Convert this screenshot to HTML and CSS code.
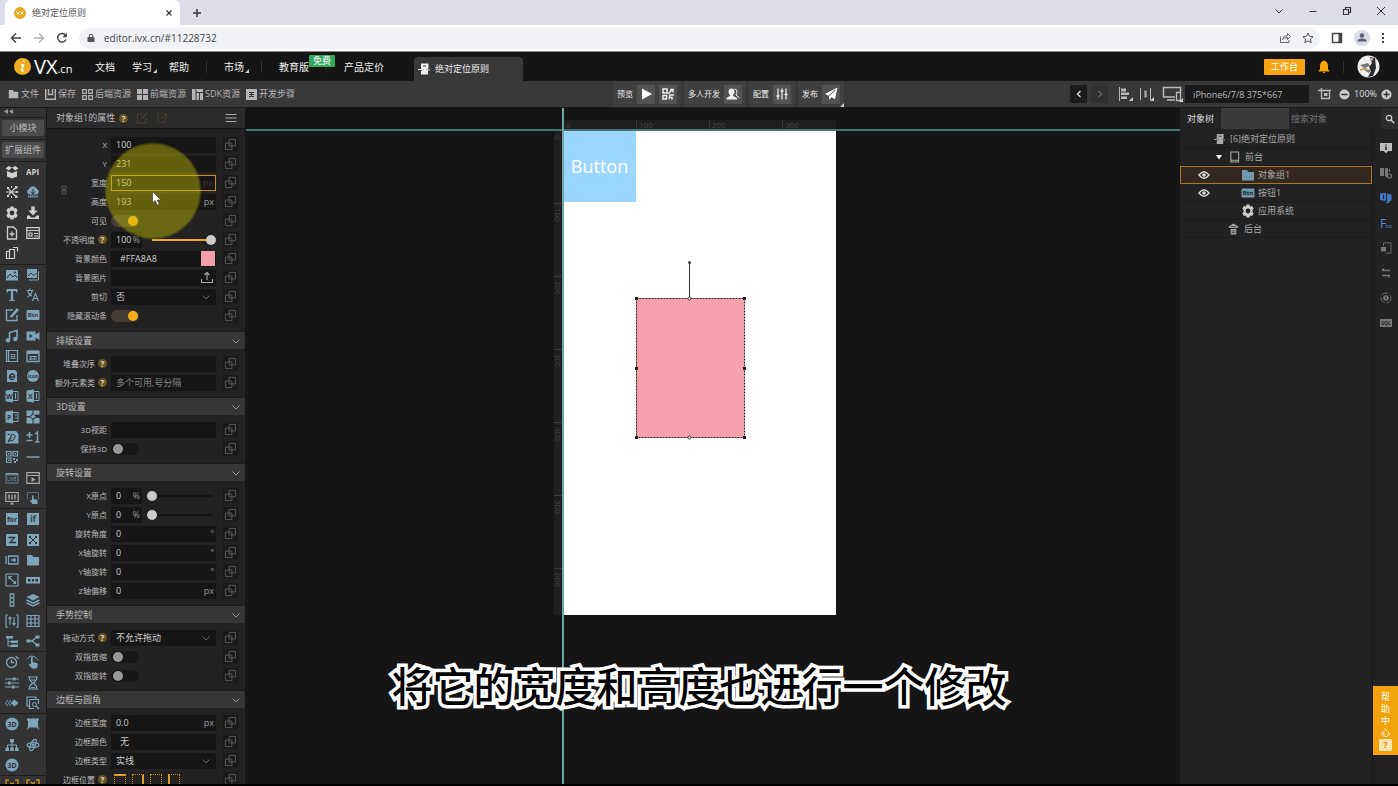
FILE: index.html
```html
<!DOCTYPE html>
<html lang="zh-CN">
<head>
<meta charset="utf-8">
<title>绝对定位原则</title>
<link rel="stylesheet" href="styles.css">
</head>
<body>
<svg class="defs" aria-hidden="true">
  <symbol id="copy" viewBox="0 0 14 14"><path d="M5.500 1.500h7v7h-7zM8.500 8.500v4h-7v-7h4M5.500 5.500h3v3" fill="none" stroke="currentColor"/></symbol>
  <symbol id="chev" viewBox="0 0 10 10"><path d="M1.500 3.500 5 7l3.500-3.500" fill="none" stroke="currentColor"/></symbol>
  <symbol id="gear" viewBox="0 0 14 14"><path d="M5.500.500h3l.5 2 2-.5 1.700 2.500L11.500 6v2l1.200 1.500L11 12l-2-.5-.5 2h-3l-.5-2-2 .5-1.700-2.500L2.500 8V6L1.300 4.500 3 2l2 .5zM7 4.600a2.400 2.400 0 1 0 0 4.800 2.400 2.400 0 0 0 0-4.800z" fill="currentColor" fill-rule="evenodd"/></symbol>
  <symbol id="folder" viewBox="0 0 14 14"><path d="M1 2h5l1.500 2H13v8.500H1z" fill="currentColor"/></symbol>
  <symbol id="page" viewBox="0 0 12 12"><path d="M3 .500h7.500v5L8 7h2v4.500H3V8l3-2H3z" fill="currentColor"/><path d="M0 6.500h5M8.500 7H12M5.500 3.500h3" stroke="currentColor"/><path d="M5 3h3" stroke="#333"/></symbol>
  <symbol id="eye" viewBox="0 0 12 12"><path d="M1 6q5-6.500 10 0-5 6.500-10 0z" fill="none" stroke="currentColor" stroke-width="1.300"/><circle cx="6" cy="6" r="1.800" fill="currentColor"/></symbol>
</svg>

<div class="browser">
  <div class="tabs">
    <div class="tab">
      <svg width="12" height="12" viewBox="0 0 12 12"><circle cx="6" cy="6" r="6" fill="#e9a820"/><path d="M2.500 4.500 4 7.500l2-3M6.500 4.500l3 3M9.500 4.500l-3 3" stroke="#fff" fill="none"/></svg>
      <span class="tab-title">绝对定位原则</span>
      <button class="plain" aria-label="关闭"><svg width="8" height="8" viewBox="0 0 8 8"><path d="M1.500 1.500l5 5M6.500 1.500l-5 5" stroke="#333" stroke-width="1.200"/></svg></button>
    </div>
    <button class="plain newtab" aria-label="新标签"><svg width="10" height="10" viewBox="0 0 10 10"><path d="M5 1v8M1 5h8" stroke="#333" stroke-width="1.400"/></svg></button>
    <div class="win">
      <button class="plain" aria-label="搜索标签"><svg width="10" height="10"><use href="#chev"/></svg></button>
      <button class="plain" aria-label="最小化"><svg width="10" height="10" viewBox="0 0 10 10"><path d="M1.500 5.500h7" stroke="currentColor"/></svg></button>
      <button class="plain" aria-label="还原"><svg width="10" height="10" viewBox="0 0 10 10"><path d="M1.500 3.500h5v5h-5zM3.500 3V1.500h5v5H7" fill="none" stroke="currentColor" stroke-width="1.200"/></svg></button>
      <button class="plain" aria-label="关闭窗口"><svg width="10" height="10" viewBox="0 0 10 10"><path d="M1 1l8 8M9 1l-8 8" stroke="currentColor"/></svg></button>
    </div>
  </div>
  <div class="address">
    <button class="plain" aria-label="后退"><svg width="12" height="12" viewBox="0 0 12 12"><path d="M11 6H1.500M6 1.500 1.500 6 6 10.500" fill="none" stroke="#444" stroke-width="1.400"/></svg></button>
    <button class="plain" aria-label="前进"><svg width="12" height="12" viewBox="0 0 12 12"><path d="M1 6h9.500M6 1.500 10.500 6 6 10.500" fill="none" stroke="#b0b0b0" stroke-width="1.300"/></svg></button>
    <button class="plain" aria-label="刷新"><svg width="12" height="12" viewBox="0 0 12 12"><path d="M10 7.500A4.300 4.300 0 1 1 9.500 3.200" fill="none" stroke="#444" stroke-width="1.500"/><path d="M10.800.8v4.400H6.500z" fill="#444"/></svg></button>
    <div class="omni">
      <svg width="8" height="10" viewBox="0 0 8 10"><path d="M.5 4h7v5h-7z" fill="#555"/><path d="M2.300 4.500V3a1.700 1.700 0 0 1 3.400 0v1.500" fill="none" stroke="#555" stroke-width="1.100"/></svg>
      <input class="url" aria-label="地址" value="editor.ivx.cn/#11228732">
      <svg width="12" height="12" viewBox="0 0 12 12"><path d="M1.500 4.500v6h8.500V8M3.500 7.500q.5-4 5-4V1.500l3 3-3 3v-2q-3.500 0-5 2z" fill="none" stroke="#666"/></svg>
      <svg width="12" height="12" viewBox="0 0 12 12"><path d="M6 1l1.500 3.300 3.600.4-2.700 2.400.8 3.600L6 8.900l-3.200 1.800.8-3.600L.9 4.700l3.600-.4z" fill="none" stroke="#555"/></svg>
    </div>
    <svg width="12" height="12" viewBox="0 0 12 12"><path d="M1.500 1.500h9v9h-9z" fill="none" stroke="#444" stroke-width="1.500"/><path d="M7.500 1h3.500v10H7.500z" fill="#444"/></svg>
    <svg width="16" height="16" viewBox="0 0 16 16"><circle cx="8" cy="8" r="8" fill="#d9dbe8"/><circle cx="8" cy="5.500" r="2.200" fill="#596077"/><path d="M3.500 11.500V10q4.500-2.800 9 0v1.500z" fill="#596077"/></svg>
    <svg width="4" height="12" viewBox="0 0 4 12"><path d="M1 1h2v2H1zM1 5h2v2H1zM1 9h2v2H1z" fill="#444"/></svg>
  </div>
</div>

<header class="top">
  <a class="logo" href="#"><svg width="17" height="17" viewBox="0 0 17 17"><circle cx="8.500" cy="8.500" r="8.500" fill="#efae23"/><path d="M9.500 3.200h.8M6.800 7h2.500l-1.500 5q-.3 1.500 2 .6" fill="none" stroke="#fff" stroke-width="1.600"/></svg><span>VX</span><small>.cn</small></a>
  <nav class="menu">
    <a href="#">文档</a><a href="#" class="more">学习</a><a href="#">帮助</a><i></i>
    <a href="#" class="more">市场</a><i></i><a href="#" class="edu">教育版<b>免费</b></a><i class="tight"></i><a href="#">产品定价</a>
  </nav>
  <div class="doc-tab"><svg width="12" height="12"><use href="#page"/></svg>绝对定位原则</div>
  <div class="account">
    <button class="work">工作台</button>
    <svg width="12" height="14" viewBox="0 0 12 14"><path d="M6 .5q4 1 4 5.500v3l1.700 2.500H.3L2 9V6Q2 1.500 6 .5zM4.500 12h3L6 13.500z" fill="#f7a70c"/></svg>
    <i></i>
    <svg width="23" height="23" viewBox="0 0 23 23"><circle cx="11.500" cy="11.500" r="11" fill="#eee"/><path d="M13 2l5 1 1 10-3 8-5 1 3-6-2-4 3-4z" fill="#26292e"/><path d="M3 10l8-2 2 3-6 2zM6 14l8 1-2 3z" fill="#777"/><path d="M3 15l7-2" stroke="#d98b3c" stroke-width="1.500"/><circle cx="15" cy="4" r="1.500" fill="#c98"/></svg>
  </div>
</header>

<div class="toolbar">
  <div class="files">
    <button><svg width="11" height="12" viewBox="0 0 14 14"><use href="#folder"/></svg>文件</button>
    <button><svg width="11" height="11" viewBox="0 0 11 11"><path d="M.7 0v10.300h9.600V0M3.500 0v5.500h4V0" fill="none" stroke="currentColor" stroke-width="1.400"/></svg>保存</button>
    <button><svg width="11" height="11" viewBox="0 0 11 11"><path d="M.7.700h3.600v3.600H.700zM6.700.700h3.600v3.600H6.700zM.700 6.700h3.600v3.600H.700zM6.700 6.700h3.600v3.600H6.700z" fill="none" stroke="currentColor" stroke-width="1.200"/></svg>后端资源</button>
    <button><svg width="11" height="11" viewBox="0 0 11 11"><path d="M0 0h5v5H0zM6 0h5v5H6zM0 6h5v5H0zM6 6h5v5H6z" fill="currentColor"/></svg>前端资源</button>
    <button><svg width="11" height="11" viewBox="0 0 11 11"><path d="M0 0h3.500v11H0zM4.500 0H11v3H4.500zM4.500 4H7v7H4.500zM8 4h3v7H8z" fill="currentColor"/></svg>SDK资源</button>
    <button><svg width="11" height="11" viewBox="0 0 11 11"><path d="M0 0h11v11H0z" fill="currentColor"/><path d="M3 3.500h5M3 5.500h5M3 7.500h5M5.500 3v5" stroke="#383838"/></svg>开发步骤</button>
  </div>
  <div class="run">
    <div class="grp">预览
      <button aria-label="运行"><svg width="14" height="14" viewBox="0 0 14 14"><path d="M3 1.500 13 7 3 12.500z" fill="#fff"/></svg></button>
      <button aria-label="二维码"><svg width="14" height="14" viewBox="0 0 14 14"><path d="M2 2h4v4H2zM2 8.500h3.500V12H2zM9 2.500h3v3M8 12l1-4h4M9 10.500h2v2M7 7l4-4" fill="none" stroke="#eee" stroke-width="1.500"/></svg></button></div>
    <div class="grp">多人开发
      <button aria-label="多人开发"><svg width="14" height="14" viewBox="0 0 14 14"><path d="M5.500 1.500a3 3 0 0 1 3 3.500q0 2-1.500 3v1l4 2v1.500H.5V11L4 9V8Q2.500 7 2.500 5a3 3 0 0 1 3-3.500z" fill="#eee"/><path d="M8.500 2q3 0 2.500 3.500-.2 1.500-1 2.500l3.500 3" fill="none" stroke="#eee"/></svg></button></div>
    <div class="grp">配置
      <button aria-label="配置"><svg width="14" height="14" viewBox="0 0 14 14"><path d="M3 1.500v11M7 1.500v11M11 1.500v11M1.500 9h3M5.500 4h3M9.500 7.500h3" stroke="#eee" stroke-width="1.300"/></svg></button></div>
    <div class="grp tri">发布
      <button aria-label="发布"><svg width="14" height="14" viewBox="0 0 14 14"><path d="M13.500.500 11 12.500 7.500 10l-2 3-.7-4.300L1 7z" fill="#fff"/><path d="M5 8.700 11.500 3" stroke="#525252"/></svg></button></div>
  </div>
  <div class="view">
    <button class="hist on" aria-label="撤销"><svg width="8" height="8" viewBox="0 0 8 8"><path d="M5.500 1 2.500 4l3 3" fill="none" stroke="currentColor" stroke-width="1.300"/></svg></button>
    <button class="hist" aria-label="重做"><svg width="8" height="8" viewBox="0 0 8 8"><path d="M2.500 1l3 3-3 3" fill="none" stroke="currentColor" stroke-width="1.300"/></svg></button>
    <button class="tool tri" aria-label="对齐"><svg width="14" height="14" viewBox="0 0 14 14"><path d="M1.500 0v14" stroke="#bbb"/><path d="M3 1.500h5v3H3zM3 5.500h8v2.500H3zM3 9.500h6v2.500H3z" fill="#bbb"/></svg></button>
    <button class="tool tri" aria-label="分布"><svg width="14" height="14" viewBox="0 0 14 14"><path d="M1.500 1v12M11.500 1v12" stroke="#bbb"/><path d="M5.500 3.500h2v7h-2z" fill="#bbb"/></svg></button>
    <button class="tool wide tri" aria-label="设备"><svg width="20" height="16" viewBox="0 0 20 16"><path d="M13 11H1.500V1.500h17V6" fill="none" stroke="#bbb" stroke-width="1.500"/><path d="M5 14h8M14.500 6.500h4v8h-4z" fill="none" stroke="#bbb" stroke-width="1.300"/></svg></button>
    <input class="device" aria-label="设备尺寸" value="iPhone6/7/8 375*667">
    <button class="tool" aria-label="裁切"><svg width="14" height="14" viewBox="0 0 14 14"><path d="M0 3.500h13M3.500 1v10.500h8v-8" fill="none" stroke="#bbb" stroke-width="1.300"/><path d="M6 6h3.500v3H6z" fill="#bbb"/></svg></button>
    <button class="tool" aria-label="缩小"><svg width="11" height="11" viewBox="0 0 11 11"><circle cx="5.500" cy="5.500" r="5" fill="#ccc"/><path d="M2.500 5.500h6" stroke="#333" stroke-width="1.500"/></svg></button>
    <span class="zoom">100%</span>
    <button class="tool" aria-label="放大"><svg width="11" height="11" viewBox="0 0 11 11"><circle cx="5.500" cy="5.500" r="5" fill="#ccc"/><path d="M2.500 5.500h6M5.500 2.500v6" stroke="#333" stroke-width="1.500"/></svg></button>
  </div>
</div>

<main class="work-area">
  <aside class="rail">
    <div class="collapse"><svg width="9" height="5" viewBox="0 0 9 5"><path d="M4 0v5L0 2.500zM9 0v5L5 2.500z" fill="#999"/></svg></div>
    <div class="cell"><button class="mod">小模块</button></div>
    <div class="cell"><button class="mod">扩展组件</button></div>
    <div class="set r5 light">
      <svg viewBox="0 0 14 14"><path d="M7 2.500 3.500 1 .5 3.500 4 5.500zM7 2.500 10.500 1l3 2.500L10 5.500zM2 6l5 2 5-2v5.500L7 13.500l-5-2z" fill="currentColor"/></svg>
      <span class="api">API</span>
      <svg viewBox="0 0 14 14"><path d="M1 7h5l5-4.500M6 7l6 0M6 7l5 4.500M3 3l3 4-3 4" fill="none" stroke="currentColor" stroke-width="1.200"/><path d="M2 2h2v2H2zM10 1h2.500v2.500H10zM11 6h2v2h-2zM10 10.500h2.500V13H10zM2 10h2v2H2zM6 1h1v2H6zM6 11h1v2H6z" fill="currentColor"/></svg>
      <svg class="blue" viewBox="0 0 14 14"><path d="M3 9.500a3 3 0 0 1 0-5.500 4.300 4.300 0 0 1 8 0 3 3 0 0 1 0 5.500z" fill="currentColor"/><path d="M7 4v5M5 6.500 7 9l2-2.500" stroke="#333" fill="none"/><path d="M2 11.500h10" stroke="currentColor" stroke-dasharray="1.500 .6" stroke-width="2"/></svg>
      <svg><use href="#gear"/></svg>
      <svg viewBox="0 0 14 14"><path d="M5.300.5h3.400v4h3L7 9.500l-4.700-5h3zM1 9.500h2.500l1.500 2h4l1.500-2H13V13H1z" fill="currentColor"/></svg>
      <svg viewBox="0 0 14 14"><path d="M2.500 1h6L11.500 4v9h-9zM7 5.500v5M4.500 8h5" fill="none" stroke="currentColor" stroke-width="1.300"/></svg>
      <svg viewBox="0 0 14 14"><path d="M.8 1.700h12.400v10.600H.8zM1 4.500h12M3 7h3v3H3zM8 7.500h4M8 10h4" fill="none" stroke="currentColor" stroke-width="1.200"/></svg>
      <svg viewBox="0 0 14 14"><path d="M4 12.500H1.500v-7H4M4.500 3.500h5v9h-5zM8 1.500h4.500v4" fill="none" stroke="currentColor" stroke-width="1.200"/></svg>
    </div>
    <div class="set r12">
      <svg viewBox="0 0 14 14"><path d="M1 2h12v10.500H1z" fill="currentColor"/><path d="M2 10l3-4 3 3 2-2 2.500 3" fill="none" stroke="#333"/><circle cx="10" cy="4.500" r="1" fill="#333"/></svg>
      <svg viewBox="0 0 14 14"><path d="M1 1h10v9H1z" fill="currentColor"/><path d="M12.500 3.500V12H3" fill="none" stroke="currentColor"/><path d="M2 8l3-3 2.500 2.500 3-2" fill="none" stroke="#333"/></svg>
      <svg viewBox="0 0 14 14"><path d="M1.500 1h11v3.500h-1.200L10.500 3H8.200v8.500l1.500.5v1H4.300v-1l1.500-.5V3H3.500l-.8 1.500H1.500z" fill="currentColor"/></svg>
      <svg viewBox="0 0 14 14"><path d="M.5 2.500h7M4 .5v2M1.500 9Q6 6.500 6 2.500M2 3.500Q3 7 6 8M6.500 13l3-7.500 3 7.500M7.500 10.500h4" fill="none" stroke="currentColor" stroke-width="1.200"/></svg>
      <svg viewBox="0 0 14 14"><path d="M8 2H1.500v10.500H12V7" fill="none" stroke="currentColor" stroke-width="1.400"/><path d="M12 0l2 2-6.500 7L5 10l.5-2.500z" fill="currentColor"/></svg>
      <svg viewBox="0 0 14 14"><rect x=".5" y="2" width="13" height="10" rx="1" fill="currentColor"/><text x="7" y="9.300" font-size="6" font-weight="700" text-anchor="middle" fill="#333">Btn</text></svg>
      <svg viewBox="0 0 14 14"><path d="M4.500 11V3.500l7.500-2V9.500" fill="none" stroke="currentColor" stroke-width="1.600"/><circle cx="3" cy="11.300" r="2.200" fill="currentColor"/><circle cx="10.300" cy="10" r="2.200" fill="currentColor"/></svg>
      <svg viewBox="0 0 14 14"><path d="M.5 2.500h9v3L13.500 3v8L9.500 8.500v3h-9z" fill="currentColor"/><path d="M3.500 5v4L7 7z" fill="#333"/></svg>
      <svg viewBox="0 0 14 14"><path d="M1.500 1.500h11v11h-11zM3.500 2v10" fill="none" stroke="currentColor" stroke-width="1.200"/><path d="M5.500 5.500h5M5.500 7.500h5M5.500 9.500h5M6.500 5v5M9.500 5v5" stroke="currentColor" stroke-width=".7"/></svg>
      <svg viewBox="0 0 14 14"><path d="M1 2.500h12v10H1z" fill="none" stroke="currentColor" stroke-width="1.300"/><path d="M1 1.500h12v3.500H1z" fill="currentColor"/><path d="M3 7.500h8M3 10h8M5 7v4M8.500 7v4" stroke="currentColor"/></svg>
      <svg viewBox="0 0 14 14"><path d="M2 1h8l2 2v10H2z" fill="currentColor"/><path d="M9.500 9.500Q6 12 4.500 8.500 4.500 5.500 7 5q3 0 2.500 3h-5" fill="none" stroke="#333" stroke-width="1.300"/></svg>
      <svg viewBox="0 0 14 14"><circle cx="7" cy="7" r="6" fill="currentColor"/><text x="7" y="9" font-size="5" font-weight="700" text-anchor="middle" fill="#333">icon</text></svg>
      <svg viewBox="0 0 14 14"><path d="M.5 1.500 8 .5v13l-7.500-1z" fill="currentColor"/><path d="M8 2.500h5v9H8M10.500 4v6" fill="none" stroke="currentColor"/><text x="4.300" y="9.500" font-size="7" font-weight="700" text-anchor="middle" fill="#333">W</text></svg>
      <svg viewBox="0 0 14 14"><path d="M.5 1.500 8 .5v13l-7.500-1z" fill="currentColor"/><path d="M8 2.500h5v9H8M10.500 4v6" fill="none" stroke="currentColor"/><text x="4.300" y="9.500" font-size="7" font-weight="700" text-anchor="middle" fill="#333">X</text></svg>
      <svg viewBox="0 0 14 14"><path d="M.5 1.500 8 .5v13l-7.500-1z" fill="currentColor"/><path d="M8 2.500h5v9H8M10 5h2M10 8h2" fill="none" stroke="currentColor"/><text x="4.300" y="9.500" font-size="7" font-weight="700" text-anchor="middle" fill="#333">P</text></svg>
      <svg viewBox="0 0 14 14"><path d="M.5.500h6v3L4 6H.5zM7.500.500h6v4h-4l-2 1zM.5 7.500h4l2 2v4h-6zM9.500 8h4v5.500h-6V10zM4.500 6.500l2.500 2 3-2-3-2z" fill="currentColor"/></svg>
      <svg viewBox="0 0 14 14"><path d="M.5 1h10.500L13.500 4v9.500H.5z" fill="currentColor"/><path d="M3 11.500 7.500 4l3 2-2 4-5.500 1.500 4-4M2.500 4l3 1" fill="none" stroke="#333"/></svg>
      <svg viewBox="0 0 14 14"><path d="M.5 5h6M3.500 2v6M.5 10.500h6M9 4l2.500-2v10M9 12h4.500" fill="none" stroke="currentColor" stroke-width="1.500"/></svg>
      <svg viewBox="0 0 14 14"><path d="M1.500 1.500H6V6H1.500zM8 1.500h4.500V6H8zM1.500 8H6v4.500H1.500z" fill="none" stroke="currentColor" stroke-width="1.200"/><path d="M3 3h1.500v1.500H3zM9.500 3H11v1.500H9.500zM3 9.500h1.500V11H3zM8 8h2v2H8zM11 9h2v2h-2zM9 11h2v2H9z" fill="currentColor"/></svg>
      <svg viewBox="0 0 14 14"><path d="M.5 7h13" stroke="currentColor" stroke-width="1.500"/></svg>
      <svg viewBox="0 0 14 14"><path d="M1 2.500h12v9.500H1z" fill="none" stroke="currentColor" opacity=".7"/><path d="M1 2h12v2.500H1z" fill="currentColor" opacity=".7"/><text x="7" y="10" font-size="5" text-anchor="middle" fill="currentColor">LIVE</text></svg>
      <svg class="pale" viewBox="0 0 14 14"><path d="M.8 1.700h12.400v10.600H.8zM1 4.500h12" fill="none" stroke="currentColor" stroke-width="1.200"/><path d="M5.500 6v5L9.500 8.500z" fill="currentColor"/></svg>
      <svg class="pale" viewBox="0 0 14 14"><path d="M.8 1.500h12.400v9H.8zM5 13h4M7 11v2M4 3.500v5M7 3.500v5M10 3.500v5M3 5h2M6 7h2M9 5h2" fill="none" stroke="currentColor" stroke-width="1.200"/></svg>
      <svg viewBox="0 0 14 14"><path d="M1.500 8.500v-7h11v7" fill="none" stroke="#5b6b75"/><path d="M6 4.500h1.500V8l4 1V13h-5L3.500 9.500 5 9l1 .8z" fill="currentColor"/></svg>
    </div>
    <div class="set r7">
      <svg viewBox="0 0 14 14"><rect x="1" y="1" width="12" height="12" fill="currentColor"/><text x="7" y="9.500" font-size="7" font-weight="700" text-anchor="middle" fill="#333">for</text></svg>
      <svg viewBox="0 0 14 14"><rect x="1" y="1" width="12" height="12" fill="currentColor"/><text x="7" y="9.800" font-size="8" font-weight="700" text-anchor="middle" fill="#333">if</text></svg>
      <svg viewBox="0 0 14 14"><rect x="1" y="1" width="12" height="12" fill="currentColor"/><path d="M3.500 4.500h6L5 9.500h6" fill="none" stroke="#333" stroke-width="1.300"/></svg>
      <svg viewBox="0 0 14 14"><rect x="1" y="1" width="12" height="12" fill="currentColor"/><path d="M4 4l6 6M10 4l-6 6" stroke="#333"/><path d="M3 3h2v2H3zM9 3h2v2H9zM3 9h2v2H3zM9 9h2v2H9z" fill="#333"/></svg>
      <svg viewBox="0 0 14 14"><path d="M3.500 3h9.500v8H3.500zM1 3v8M6 7h4M8.500 5l2 2-2 2" fill="none" stroke="currentColor" stroke-width="1.300"/></svg>
      <svg><use href="#folder"/></svg>
      <svg viewBox="0 0 14 14"><path d="M1 1h12v12H1zM4 6V3.500h3M3.500 3.500l7 7M10.500 8v2.500H8" fill="none" stroke="currentColor" stroke-width="1.200"/></svg>
      <svg viewBox="0 0 14 14"><path d="M0 4h14v6.500H0z" fill="currentColor"/><path d="M2 6h2.500v2.500H2zM6 6h2v2.500H6zM9.500 6H12v2.500H9.500z" fill="#333"/></svg>
      <svg viewBox="0 0 14 14"><path d="M4.500 0h5v14h-5z" fill="currentColor" opacity=".8"/><path d="M6 2h2v2H6zM6 6h2v2H6zM6 10h2v2H6z" fill="#333"/></svg>
      <svg viewBox="0 0 14 14"><path d="M7 1l6.500 3L7 7.500.5 4z" fill="currentColor"/><path d="M.5 7 7 10.200 13.500 7M.5 9.800 7 13l6.500-3.200" fill="none" stroke="currentColor" stroke-width="1.400"/></svg>
      <svg viewBox="0 0 14 14"><path d="M3 1H1v12h2M11 1h2v12h-2M5 11V3.500M3.500 5 5 3l1.500 2M9 3v7.500M7.500 9 9 11l1.500-2" fill="none" stroke="currentColor" stroke-width="1.200"/></svg>
      <svg viewBox="0 0 14 14"><path d="M1 1.500h12v11H1zM1 5h12M1 9h12M5 1.500v11M9 1.500v11" fill="none" stroke="currentColor" stroke-width="1.200"/></svg>
      <svg viewBox="0 0 14 14"><path d="M1 2h7v2.500H1zM6 6.500h7V9H6zM6 10.500h7V13H6z" fill="currentColor"/><path d="M3 4v8h3M3 7.700h3" fill="none" stroke="currentColor"/></svg>
      <svg viewBox="0 0 14 14"><path d="M3 7h3l5-4M6 7l5 4" fill="none" stroke="currentColor" stroke-width="1.300"/><path d="M.5 5.500h4v3h-4zM9.500 1.500h4v3h-4zM9.500 9.500h4v3h-4z" fill="currentColor"/></svg>
    </div>
    <div class="set r3">
      <svg viewBox="0 0 14 14"><circle cx="6.500" cy="7.500" r="5" fill="none" stroke="currentColor" stroke-width="1.400"/><path d="M6.500 4.500v3H9M10.500 1l3 3" fill="none" stroke="currentColor" stroke-width="1.300"/></svg>
      <svg viewBox="0 0 14 14"><path d="M5 2h1.700v5l5 1.300V11l-1 2.500H6L2.500 9.500 4 8.700l1 .8z" fill="currentColor"/><path d="M1.500 4Q3 0 8 1.500q3 1.500 4 4" fill="none" stroke="currentColor"/></svg>
      <svg viewBox="0 0 14 14"><path d="M0 3h14M0 7h14M0 11h14" stroke="currentColor"/><path d="M8 1.500h2.500v3H8zM3 5.500h2.500v3H3zM7 9.500h2.500v3H7z" fill="currentColor"/></svg>
      <svg viewBox="0 0 14 14"><path d="M2 1h10M2 13h10M3.500 1v2.500L6.500 7l-3 3.500V13M10.500 1v2.500L7.500 7l3 3.500V13M5 11.500h4M5 4h4" fill="none" stroke="currentColor" stroke-width="1.200"/></svg>
      <svg viewBox="0 0 14 14"><path d="M9.500 3.500 13.500 7l-4 3.500L5.500 7z" fill="currentColor"/><path d="M3 4 .5 7 3 10M6 4 3.500 7 6 10" fill="none" stroke="currentColor"/></svg>
      <svg viewBox="0 0 14 14"><path d="M10 3V1H1v9h2M3.500 3.500h9V8M3.500 3.500v9H8" fill="none" stroke="currentColor" stroke-width="1.200"/><circle cx="8.500" cy="8.500" r="2" fill="none" stroke="currentColor"/><path d="M10 10l3 3" stroke="currentColor" stroke-width="1.500"/></svg>
    </div>
    <div class="set r3">
      <svg viewBox="0 0 14 14"><circle cx="7" cy="7" r="6.500" fill="currentColor"/><text x="7" y="9.500" font-size="7" font-weight="700" text-anchor="middle" fill="#333">3D</text></svg>
      <svg viewBox="0 0 14 14"><path d="M1 1.500h12v2h-1v6l1.500 3.500-3-2.500h-7L.5 13 2 9.500v-6H1z" fill="currentColor"/></svg>
      <svg viewBox="0 0 14 14"><path d="M5 1h4v3.500H5zM.5 9.500h3.500V13H.5zM5.300 9.500h3.500V13H5.300zM10 9.500h3.500V13H10z" fill="currentColor"/><path d="M7 4v6M2.500 10V7h9v3" fill="none" stroke="currentColor"/></svg>
      <svg viewBox="0 0 14 14"><ellipse cx="7" cy="7" rx="6" ry="2.300" fill="none" stroke="currentColor" stroke-width="1.200"/><ellipse cx="7" cy="7" rx="2.300" ry="6" fill="none" stroke="currentColor" stroke-width="1.200" transform="rotate(25 7 7)"/><circle cx="7" cy="7" r="1.500" fill="currentColor"/></svg>
      <svg viewBox="0 0 14 14"><circle cx="7" cy="7" r="6.500" fill="currentColor"/><text x="7" y="9.500" font-size="7" font-weight="700" text-anchor="middle" fill="#333">3D</text></svg>
    </div>
    <div class="set last">
      <svg viewBox="0 0 14 14"><path d="M4 4H1v9M10 4h3v9M5 7.500h4" fill="none" stroke="currentColor" stroke-width="1.500"/></svg>
      <svg viewBox="0 0 14 14"><path d="M4 4H1v9M10 4h3v9M5 6l4 4M9 6l-4 4" fill="none" stroke="currentColor" stroke-width="1.500"/></svg>
    </div>
  </aside>

  <section class="props">
    <div class="props-title"><h2>对象组1的属性</h2><span class="help">?</span>
      <svg width="12" height="12" viewBox="0 0 12 12"><path d="M7 2H1.500v9H10V6M5 7l6-6" fill="none" stroke="#484331" stroke-width="1.200"/></svg>
      <svg width="12" height="12" viewBox="0 0 12 12"><path d="M2 1.500h8l1 3-3 6H2zM5 7l5-5" fill="none" stroke="#41392b" stroke-width="1.200"/></svg>
      <button class="plain burger" aria-label="菜单"><svg width="12" height="10" viewBox="0 0 12 10"><path d="M.5 1.500h11M.5 5h11M.5 8.500h11" stroke="#aaa"/></svg></button></div>

    <div class="rows roomy">
      <svg class="chain" width="6" height="10" viewBox="0 0 6 10"><path d="M1 4V1h4v3M1 6v3h4V6M3 3v4M1 4.500h4M1 5.800h4" fill="none" stroke="#555"/></svg>
      <div class="row"><label for="px">X</label><div class="field"><input id="px" value="100"></div><button class="bind" aria-label="绑定"><svg><use href="#copy"/></svg></button></div>
      <div class="row"><label for="py">Y</label><div class="field"><input id="py" value="231"></div><button class="bind" aria-label="绑定"><svg><use href="#copy"/></svg></button></div>
      <div class="row"><label for="pw">宽度</label><div class="field focus"><input id="pw" value="150"><span class="dim">px</span></div><button class="bind" aria-label="绑定"><svg><use href="#copy"/></svg></button></div>
      <div class="row"><label for="ph">高度</label><div class="field"><input id="ph" value="193"><span>px</span></div><button class="bind" aria-label="绑定"><svg><use href="#copy"/></svg></button></div>
      <div class="row"><label for="pv">可见</label><div class="slot"><input type="checkbox" class="switch" id="pv" checked></div><button class="bind" aria-label="绑定"><svg><use href="#copy"/></svg></button></div>
      <div class="row"><label for="po">不透明度<span class="help">?</span></label><div class="slot"><div class="field mini"><input id="po" value="100"><span>%</span></div><input type="range" class="full" aria-label="不透明度" value="100"></div><button class="bind" aria-label="绑定"><svg><use href="#copy"/></svg></button></div>
      <div class="row"><label for="pc">背景颜色</label><div class="field"><input id="pc" class="inset" value="#FFA8A8"><button class="swatch" aria-label="选择颜色"></button></div><button class="bind" aria-label="绑定"><svg><use href="#copy"/></svg></button></div>
      <div class="row"><label for="pi">背景图片</label><div class="field"><input id="pi"><svg width="14" height="13" viewBox="0 0 14 13"><path d="M1.500 8v3.500h11V8M7 9V1.500M4.500 4 7 1.500 9.500 4" fill="none" stroke="#aaa" stroke-width="1.100"/></svg></div><button class="bind" aria-label="绑定"><svg><use href="#copy"/></svg></button></div>
      <div class="row"><label for="pk">剪切</label><div class="field"><select id="pk"><option>否</option><option>是</option></select><svg class="chev"><use href="#chev"/></svg></div><button class="bind" aria-label="绑定"><svg><use href="#copy"/></svg></button></div>
      <div class="row"><label for="psb">隐藏滚动条</label><div class="slot"><input type="checkbox" class="switch" id="psb" checked></div><button class="bind" aria-label="绑定"><svg><use href="#copy"/></svg></button></div>
    </div>

    <h3>排版设置<svg class="chev"><use href="#chev"/></svg></h3>
    <div class="rows">
      <div class="row"><label for="z">堆叠次序<span class="help">?</span></label><div class="field"><input id="z"></div><button class="bind" aria-label="绑定"><svg><use href="#copy"/></svg></button></div>
      <div class="row"><label for="cl">额外元素类<span class="help">?</span></label><div class="field"><input id="cl" placeholder="多个可用,号分隔"></div><button class="bind" aria-label="绑定"><svg><use href="#copy"/></svg></button></div>
    </div>

    <h3>3D设置<svg class="chev"><use href="#chev"/></svg></h3>
    <div class="rows">
      <div class="row"><label for="d1">3D视距</label><div class="field"><input id="d1"></div><button class="bind" aria-label="绑定"><svg><use href="#copy"/></svg></button></div>
      <div class="row"><label for="d2">保持3D</label><div class="slot"><input type="checkbox" class="switch" id="d2"></div><button class="bind" aria-label="绑定"><svg><use href="#copy"/></svg></button></div>
    </div>

    <h3>旋转设置<svg class="chev"><use href="#chev"/></svg></h3>
    <div class="rows">
      <div class="row"><label for="ox">X原点</label><div class="slot"><div class="field mini"><input id="ox" value="0"><span>%</span></div><input type="range" aria-label="X原点" value="0"></div><button class="bind" aria-label="绑定"><svg><use href="#copy"/></svg></button></div>
      <div class="row"><label for="oy">Y原点</label><div class="slot"><div class="field mini"><input id="oy" value="0"><span>%</span></div><input type="range" aria-label="Y原点" value="0"></div><button class="bind" aria-label="绑定"><svg><use href="#copy"/></svg></button></div>
      <div class="row"><label for="ra">旋转角度</label><div class="field"><input id="ra" value="0"><span>°</span></div><button class="bind" aria-label="绑定"><svg><use href="#copy"/></svg></button></div>
      <div class="row"><label for="rx">X轴旋转</label><div class="field"><input id="rx" value="0"><span>°</span></div><button class="bind" aria-label="绑定"><svg><use href="#copy"/></svg></button></div>
      <div class="row"><label for="ry">Y轴旋转</label><div class="field"><input id="ry" value="0"><span>°</span></div><button class="bind" aria-label="绑定"><svg><use href="#copy"/></svg></button></div>
      <div class="row"><label for="rz">Z轴偏移</label><div class="field"><input id="rz" value="0"><span>px</span></div><button class="bind" aria-label="绑定"><svg><use href="#copy"/></svg></button></div>
    </div>

    <h3>手势控制<svg class="chev"><use href="#chev"/></svg></h3>
    <div class="rows">
      <div class="row"><label for="g1">拖动方式<span class="help">?</span></label><div class="field"><select id="g1"><option>不允许拖动</option></select><svg class="chev"><use href="#chev"/></svg></div><button class="bind" aria-label="绑定"><svg><use href="#copy"/></svg></button></div>
      <div class="row"><label for="g2">双指放缩</label><div class="slot"><input type="checkbox" class="switch" id="g2"></div><button class="bind" aria-label="绑定"><svg><use href="#copy"/></svg></button></div>
      <div class="row"><label for="g3">双指旋转</label><div class="slot"><input type="checkbox" class="switch" id="g3"></div><button class="bind" aria-label="绑定"><svg><use href="#copy"/></svg></button></div>
    </div>

    <h3>边框与圆角<svg class="chev"><use href="#chev"/></svg></h3>
    <div class="rows">
      <div class="row"><label for="b1">边框宽度</label><div class="field"><input id="b1" value="0.0"><span>px</span></div><button class="bind" aria-label="绑定"><svg><use href="#copy"/></svg></button></div>
      <div class="row"><label for="b2">边框颜色</label><div class="field"><input id="b2" class="inset" value="无"></div><button class="bind" aria-label="绑定"><svg><use href="#copy"/></svg></button></div>
      <div class="row"><label for="b3">边框类型</label><div class="field"><select id="b3"><option>实线</option></select><svg class="chev"><use href="#chev"/></svg></div><button class="bind" aria-label="绑定"><svg><use href="#copy"/></svg></button></div>
      <div class="row"><label>边框位置<span class="help">?</span></label><div class="slot sides"><button class="t" aria-label="上"></button><button class="r" aria-label="右"></button><button class="b" aria-label="下"></button><button class="l" aria-label="左"></button></div><button class="bind" aria-label="绑定"><svg><use href="#copy"/></svg></button></div>
    </div>
  </section>

  <section class="canvas">
    <div class="ruler-x"><span>0</span><span>100</span><span>200</span><span>300</span></div>
    <div class="ruler-y"><span>0</span><span>100</span><span>200</span><span>300</span><span>400</span><span>500</span><span>600</span></div>
    <div class="stage">
      <button class="demo">Button</button>
      <svg class="box" width="117" height="185" viewBox="0 0 117 185">
        <path d="M4 40h108v140H4z" fill="#f6a1ac"/>
        <path d="M4.500 40.500h108v139H4.500z" fill="none" stroke="#222" stroke-dasharray="2 1"/>
        <path d="M57.500 5v35" stroke="#333"/>
        <circle cx="57.500" cy="4.500" r="1.500" fill="#444"/>
        <path d="M3 39h3v3H3zM111 39h3v3h-3zM3 178h3v3H3zM111 178h3v3h-3zM3 109h3v3H3zM111 109h3v3h-3z" fill="#222"/>
        <circle cx="57.500" cy="40.500" r="1.500" fill="#fff" stroke="#333"/><circle cx="57.500" cy="179.500" r="1.500" fill="#fff" stroke="#333"/>
      </svg>
    </div>
    <div class="guide-x"></div><div class="guide-y"></div>
  </section>

  <aside class="right">
    <div class="right-head"><button class="tree-tab">对象树</button><span class="fill"></span><input aria-label="搜索对象" placeholder="搜索对象"><button class="find" aria-label="搜索"><svg width="10" height="10" viewBox="0 0 10 10"><circle cx="4" cy="4" r="2.700" fill="none" stroke="#ccc" stroke-width="1.300"/><path d="M6 6l3.300 3.300" stroke="#ccc" stroke-width="1.500"/></svg></button></div>
    <div class="right-body">
      <ul class="tree">
        <li class="d1"><svg><use href="#page"/></svg>[6]绝对定位原则</li>
        <li class="d2"><svg class="arrow" viewBox="0 0 6 6"><path d="M0 1h6L3 5.500z" fill="#fff"/></svg><svg viewBox="0 0 12 12"><path d="M2 .500h8.500v11H2zM2 9.500h8.500" fill="none" stroke="currentColor" stroke-width="1.200"/></svg>前台</li>
        <li class="d3 sel"><svg class="eye"><use href="#eye"/></svg><svg class="blue big"><use href="#folder"/></svg>对象组1</li>
        <li class="d3"><svg class="eye"><use href="#eye"/></svg><svg class="blue big" viewBox="0 0 14 14"><rect x=".5" y="2.500" width="13" height="9" rx="1" fill="currentColor"/><text x="7" y="9.200" font-size="6" font-weight="700" text-anchor="middle" fill="#222">Btn</text></svg>按钮1</li>
        <li class="d3"><span class="eye"></span><svg class="big"><use href="#gear"/></svg>应用系统</li>
        <li class="d4"><svg viewBox="0 0 12 12"><path d="M6 0l5.500 3.500-1 1.500H1.500l-1-1.500zM3 6h6v6H3z" fill="currentColor"/><path d="M4 8h4M4 10h4M3 3.500h6" stroke="#222" stroke-width=".8"/></svg>后台</li>
      </ul>
      <div class="dock">
        <svg viewBox="0 0 12 12"><path d="M0 1h12v8H8l-2 2.500L4 9H0z" fill="#bbb"/><path d="M6 2.500v1M6 4.500V8" stroke="#222" stroke-width="1.500"/></svg>
        <svg viewBox="0 0 12 12"><path d="M0 1h4v8H0zM5 1h3v10L5 9zM9 2h1v3H9z" fill="#777"/><circle cx="9.500" cy="9" r="2" fill="none" stroke="#777" stroke-width="1.200"/></svg>
        <svg viewBox="0 0 12 12"><path d="M0 1.500 6 1v8L0 8zM7 1.500l4.500 1V8L8 11.500 5 10h2z" fill="#4576c4"/><path d="M3.500 3v4" stroke="#222"/></svg>
        <svg viewBox="0 0 12 12"><text x="0" y="11" font-size="12" fill="#5f8be0">F</text><text x="5" y="11" font-size="6" fill="#5f8be0">oo</text></svg>
        <svg viewBox="0 0 12 12"><path d="M3.500 4V.800h7.500v10.400H6" fill="none" stroke="#666"/><path d="M1 5h5v4.500H1z" fill="#777"/></svg>
        <svg viewBox="0 0 12 12"><path d="M2 3.500h8M2 8.500h8M4 1.500l-2 2M8 10.500l2-2" stroke="#777" stroke-width="1.300"/></svg>
        <svg viewBox="0 0 12 12"><circle cx="6" cy="6" r="5" fill="none" stroke="#666" stroke-dasharray="7 2"/><circle cx="6" cy="6" r="2.800" fill="#777"/><path d="M6 4.500v3" stroke="#222"/></svg>
        <svg viewBox="0 0 12 12"><path d="M0 2h12v8H0z" fill="#777"/><text x="6" y="8" font-size="5" font-weight="700" text-anchor="middle" fill="#222">SQL</text></svg>
        <button class="help-center"><span>帮助中心</span><b>?</b></button>
      </div>
    </div>
  </aside>
</main>

<div class="spot"></div>
<svg class="cursor" width="10" height="15" viewBox="0 0 10 15"><path d="M.5.500v11.500l2.700-2.500 2 4.700 2-1-2-4.200h3.800z" fill="#fff" stroke="#333" stroke-width=".6"/></svg>
<p class="caption">将它的宽度和高度也进行一个修改</p>
</body>
</html>
```
FILE: styles.css
```css
* { box-sizing: border-box; }
body {
  margin: 0; height: 100vh; overflow: hidden; display: flex; flex-direction: column;
  background: #151515; color: #ccc; border-bottom: 2px solid #000;
  font: 9px/12px "Open Sans", "Noto Sans CJK SC", sans-serif;
}
button, input, select { font: inherit; color: inherit; margin: 0; padding: 0; border: 0; background: none; border-radius: 0; outline: 0; }
a { color: inherit; text-decoration: none; }
svg { display: block; flex: none; }
.defs { position: absolute; width: 0; height: 0; }
.plain { display: flex; }

/* browser chrome */
.tabs { display: flex; align-items: center; height: 25px; background: #dcdde9; padding-left: 5px; color: #333; }
.tab { display: flex; align-items: center; width: 175px; height: 25px; padding: 0 7px 0 9px; background: #fff; border-radius: 6px 6px 0 0; }
.tab-title { flex: 1; margin-left: 6px; color: #555; }
.newtab { margin-left: 12px; }
.win { display: flex; gap: 24px; margin-left: auto; padding: 0 12px 4px 0; }
.address { display: flex; align-items: center; gap: 11px; height: 27px; padding: 0 13px 0 10px; background: #fff; border-bottom: 1px solid #888; }
.omni { display: flex; flex: 1; align-items: center; gap: 11px; height: 21px; padding: 0 6px 0 8px; border-radius: 11px; background: #f1f2f6; }
.url { flex: 1; min-width: 0; color: #444; font-size: 10px; margin-left: -2px; }

/* site header */
.top { display: flex; align-items: center; height: 29px; padding: 0 18px 0 14px; background: #151515; color: #eee; font-size: 10px; }
.logo { display: flex; align-items: center; width: 81px; color: #fff; font-size: 20px; }
.logo span { margin-left: 3px; }
.logo small { font-size: 11px; align-self: flex-end; }
.menu { display: flex; align-items: center; gap: 17px; }
.menu i, .account i { width: 1px; height: 12px; background: #333; }
.more { position: relative; }
.more::after, .tri::after { content: ""; position: absolute; right: -5px; bottom: 0; border: 2px solid; border-color: transparent #ccc #ccc transparent; }
.edu { position: relative; }
.edu b { position: absolute; left: 30px; top: -6px; width: 26px; height: 12px; background: #2faa5c; border-radius: 1px; font-size: 9px; line-height: 12px; text-align: center; font-weight: 500; }
.menu .tight { background: #222; }
.doc-tab { display: flex; align-items: center; gap: 5px; align-self: flex-end; width: 109px; height: 24px; margin-left: 30px; padding-left: 4px; background: #383838; border-radius: 4px 4px 0 0; font-size: 9px; }
.account { display: flex; align-items: center; gap: 13px; margin-left: auto; }
.work { width: 41px; height: 16px; background: #f7a312; color: #fff; border-radius: 1px; font-size: 9px; }

/* toolbar */
.toolbar { display: flex; align-items: center; height: 27px; background: #383838; border-bottom: 1px solid #1a1a1a; }
.files { display: flex; flex: 0 0 613px; gap: 6px; padding-left: 8px; color: #b5b5b5; }
.files button { display: flex; align-items: center; gap: 2px; white-space: nowrap; }
.run { display: flex; gap: 3px; height: 26px; color: #eee; font-size: 8px; }
.grp { display: flex; align-items: center; gap: 4px; padding: 0 4px; background: #404040; position: relative; }
.grp button { display: flex; align-items: center; justify-content: center; width: 18px; height: 19px; background: #525252; }
.run .tri::after { right: 0; }
.view { display: flex; align-items: center; margin-left: auto; padding-right: 6px; }
.hist { display: flex; align-items: center; justify-content: center; width: 17px; height: 18px; margin-right: 4px; background: #303030; color: #666; }
.hist.on { background: #1c1c1c; color: #ddd; }
.tool { display: flex; position: relative; margin-right: 7px; }
.tool.tri::after { right: -1px; }
.hist + .tool { margin-left: 6px; }
.tool.wide { margin-left: 2px; margin-right: 3px; }
.device { width: 124px; height: 18px; margin-right: 9px; padding-left: 8px; background: #191919; color: #bbb; }
.view .tool:last-child { margin: 0; }
.zoom { color: #ddd; margin: 0 4px 0 -3px; }

/* layout */
.work-area { flex: 1; min-height: 0; display: flex; }

/* component rail */
.rail { display: flex; flex-direction: column; width: 47px; background: #333; border-right: 1px solid #1b1b1b; color: #7ea5ba; }
.collapse { height: 9px; padding: 1px 4px; }
.cell { height: 22px; padding: 2px; border-top: 1px solid #1f1f1f; }
.mod { width: 42px; height: 16px; background: #4c4c4c; border-radius: 2px; color: #bbb; }
.set { display: grid; grid-template-columns: 1fr 1fr; grid-auto-rows: 1fr; place-items: center; padding: 0 3px 0 1px; border-top: 1px solid #1d1d1d; min-height: 0; }
.set svg { width: 14px; height: 14px; font-family: "Open Sans", sans-serif; }
.r5 { flex: 5 1 0; } .r12 { flex: 12 1 0; } .r7 { flex: 7 1 0; } .r3 { flex: 3 1 0; }
.last { flex: 0 0 9px; overflow: hidden; color: #c98d22; align-items: start; }
.light { color: #d0d0d0; }
.pale { color: #aaa; }
.blue { color: #7ea5ba; }
.api { font-weight: 700; font-size: 8px; }

/* properties */
.props { width: 199px; background: #222; overflow: hidden; border-right: 1px solid #151515; }
.props-title { display: flex; align-items: center; gap: 8px; height: 21px; padding: 0 8px 0 9px; background: #2a2a2a; border-bottom: 1px solid #151515; }
h2, h3 { margin: 0; font-size: 9px; line-height: 12px; font-weight: 400; color: #bbb; }
.props-title .help { margin-left: -4px; }
.burger { margin-left: auto; }
.help { display: inline-flex; align-items: center; justify-content: center; width: 9px; height: 9px; border-radius: 5px; background: #6a5620; color: #ddd; font-size: 8px; font-weight: 700; line-height: 9px; }
h3 { display: flex; align-items: center; justify-content: space-between; height: 18px; padding: 0 4px 0 9px; background: #363636; border-top: 1px solid #1b1b1b; }
.chev { width: 10px; height: 10px; color: #999; }
.rows { padding: 5px 7px 5px 0; position: relative; }
.roomy { padding-top: 6px; padding-bottom: 6px; }
.chain { position: absolute; left: 14px; top: 56px; }
.row { display: flex; align-items: center; height: 19px; }
.row label { display: flex; align-items: center; justify-content: flex-end; gap: 3px; flex: 0 0 60px; font-size: 8px; color: #bbb; white-space: nowrap; }
.field, .slot { display: flex; align-items: center; flex: 1; min-width: 0; height: 16px; margin: 0 7px 0 4px; }
.field { background: #161616; padding-right: 2px; color: #ccc; }
.field input { flex: 1; min-width: 0; width: 0; height: 16px; padding-left: 5px; font-size: 9px; }
.field input.inset { padding-left: 9px; }
.field input::placeholder, .right-head input::placeholder { color: #777; opacity: 1; }
.field input::placeholder { font-size: 9px; color: #888; }
.field span { color: #999; font-size: 9px; }
.field .dim { color: #4a3020; }
.focus { border: 1px solid #c8912c; }
.focus input { height: 14px; padding-left: 4px; }
.swatch { width: 14px; height: 15px; margin-right: -1px; background: #f59eab; }
.field select { flex: 1; appearance: none; padding-left: 5px; }
.field .chev { color: #666; margin-right: 3px; }
.bind { width: 15px; height: 15px; padding: 1px; background: #1a1a1a; color: #5c5c5c; }
.bind svg { width: 13px; height: 13px; }
.slot .mini { flex: 0 0 31px; margin: 0; }
.slot input[type=range] { flex: 1; min-width: 0; height: 10px; margin: 0 4px 0 5px; appearance: none; background: linear-gradient(#151515, #151515) center / 100% 2px no-repeat; }
.slot input.full { margin: 0 0 0 10px; background: linear-gradient(#efa51c, #efa51c) left center / 55px 2px no-repeat; }
input[type=range]::-webkit-slider-thumb { appearance: none; width: 10px; height: 10px; border-radius: 5px; background: #ccc; }
.switch { appearance: none; display: flex; width: 28px; height: 12px; border-radius: 6px; background: #171717; }
.switch::before { content: ""; width: 10px; height: 10px; margin: 1px 2px; border-radius: 5px; background: #999; }
.switch:checked { background: #443d35; justify-content: flex-end; }
.switch:checked::before { background: #f6ab18; margin-right: 1px; }
.sides { gap: 6px; padding-left: 3px; }
.sides button { width: 12px; height: 12px; border: 1px dotted #c98d22; }
.sides .t { border-top: 2px solid #e0a030; }
.sides .r { border-right: 2px solid #e0a030; }
.sides .b { border-bottom: 2px solid #e0a030; }
.sides .l { border-left: 2px solid #e0a030; }

/* canvas */
.canvas { flex: 1; position: relative; min-width: 0; overflow: hidden; background: #151515; }
.ruler-x, .ruler-y { position: absolute; display: flex; background: #1f1f1f; color: #444; font-size: 8px; line-height: 10px; }
.ruler-x { left: 317px; top: 12px; width: 273px; height: 10px; }
.ruler-y { left: 308px; top: 22px; width: 9px; height: 485px; flex-direction: column; }
.ruler-x span { flex: 0 0 73px; border-left: 1px solid #383838; padding-left: 2px; }
.ruler-x span:last-child { flex: 1; }
.ruler-y span { flex: 0 0 73px; writing-mode: vertical-rl; border-top: 1px solid #383838; padding-top: 4px; line-height: 9px; }
.ruler-y span:last-child { flex: 1; }
.stage { position: absolute; left: 317px; top: 22px; width: 273px; height: 485px; background: #fff; }
.demo { display: block; width: 73px; height: 72px; background: #9bd6fe; color: #fff; font-size: 18px; line-height: 24px; text-align: center; }
.box { position: absolute; left: 69px; top: 128px; }
.guide-x, .guide-y { position: absolute; }
.guide-x { left: 0; right: 0; top: 21px; height: 2px; background: #44766d; }
.guide-y { top: 0; bottom: 0; left: 316px; width: 2px; background: #72a5a6; }

/* object tree */
.right { width: 218px; display: flex; flex-direction: column; background: #222; }
.right-head { display: flex; height: 21px; background: #3a3a3a; }
.tree-tab { width: 41px; background: #222; color: #ddd; }
.fill { flex: 1; }
.right-head input { width: 92px; padding-left: 2px; background: #222; }
.find { display: flex; align-items: center; justify-content: center; width: 17px; background: #2c2c2c; }
.right-body { flex: 1; display: flex; min-height: 0; }
.tree { flex: 1; margin: 0; padding: 1px 0 0; list-style: none; border-right: 1px solid #191919; color: #aaa; }
.tree li { display: flex; align-items: center; height: 18px; gap: 5px; border-bottom: 1px solid #1b1b1b; }
.tree svg { width: 11px; height: 12px; }
.tree svg.big { width: 14px; height: 14px; margin-left: 26px; margin-right: -2px; }
.tree .eye { width: 12px; height: 12px; color: #ddd; }
.tree .arrow { width: 6px; height: 6px; margin-right: 2px; }
.tree .d1 { padding-left: 34px; }
.tree .d2 { padding-left: 36px; }
.tree .d3 { padding-left: 18px; }
.tree .d4 { padding-left: 48px; }
.tree .sel { border: 1px solid #ac7630; background: #34271f; padding-left: 17px; }
.tree .big { color: #ccc; }
.tree .blue { color: #7199ac; }
.dock { display: flex; flex-direction: column; align-items: center; width: 25px; gap: 13px; padding: 13px 0 29px; }
.dock svg { width: 12px; height: 12px; font-family: "Open Sans", sans-serif; }
.help-center { width: 25px; height: 69px; margin-top: auto; padding: 5px 8px; background: #f2a20b; color: #fff; line-height: 12px; }
.help-center span { display: block; width: 9px; font-size: 9px; }
.help-center b { display: block; width: 13px; height: 12px; margin-left: -2px; background: #fde3ae; color: #d08a10; border-radius: 1px; }

/* overlays */
.spot { position: absolute; left: 104px; top: 142px; width: 98px; height: 98px; border-radius: 50%; background: radial-gradient(closest-side, rgba(205, 200, 0, .42) 94%, rgba(205, 200, 0, 0)); pointer-events: none; }
.cursor { position: absolute; left: 152px; top: 191px; }
.caption {
  position: absolute; left: 0; right: 0; bottom: 78px; margin: 0; text-align: center;
  font: 500 41px/48px "Noto Sans CJK SC", sans-serif; color: #000;
  -webkit-text-stroke: 7px #fff; paint-order: stroke fill; pointer-events: none;
}
```
